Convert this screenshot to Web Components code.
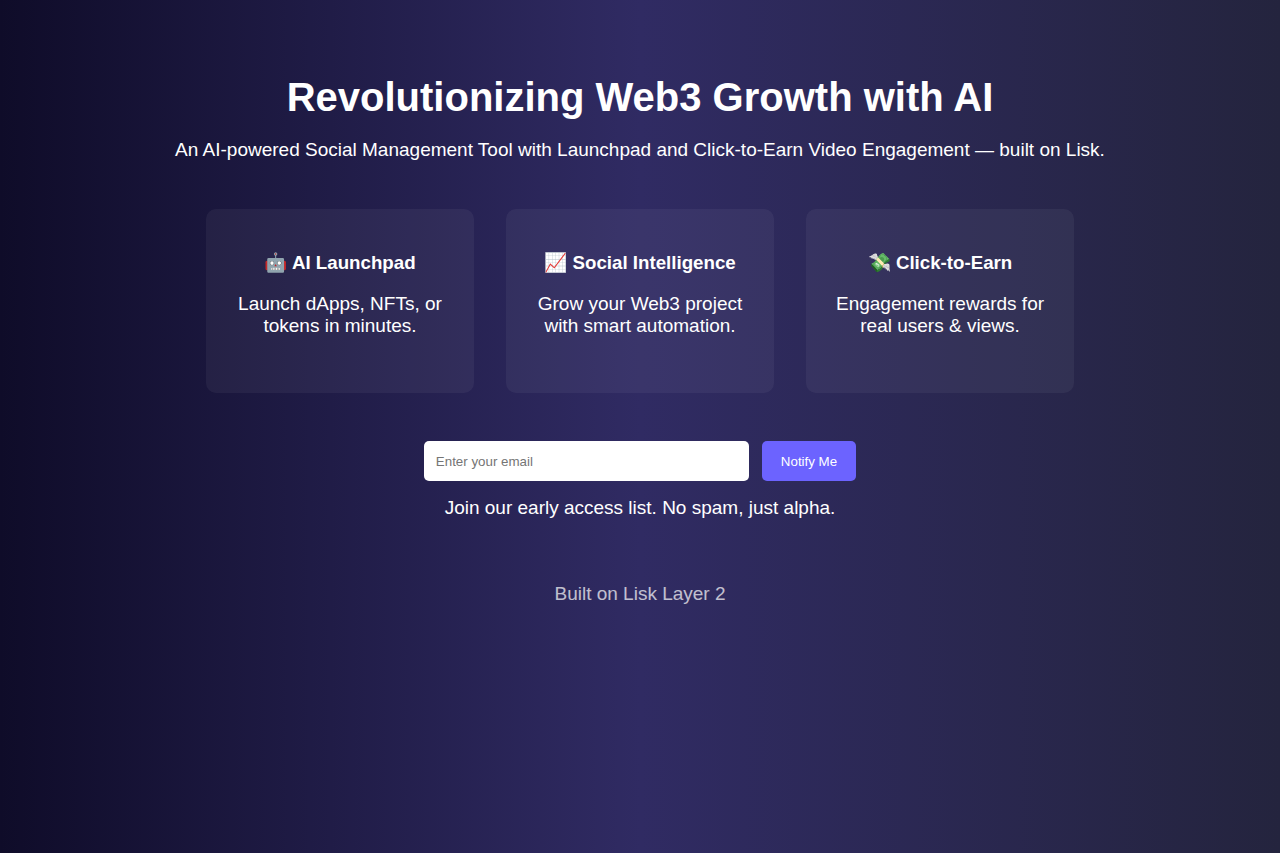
<!DOCTYPE html>
<html lang="en">
<head>
<meta charset="utf-8">
<meta name="viewport" content="width=device-width, initial-scale=1">
<title>Revolutionizing Web3 Growth with AI</title>
<style>
body {
  margin: 0;
  min-height: 100vh;
  background: linear-gradient(to right, #0f0c29, #302b63, #24243e);
  color: #fff;
  font-family: "Liberation Sans", Arial, sans-serif;
}
</style>
</head>
<body>
<landing-page>
  <page-hero slot="hero">
    <span slot="title">Revolutionizing Web3 Growth with AI</span>
    An AI-powered Social Management Tool with Launchpad and Click-to-Earn Video Engagement — built on Lisk.
  </page-hero>
  <feature-list>
    <feature-card><span slot="title">🤖 AI Launchpad</span>Launch dApps, NFTs, or tokens in minutes.</feature-card>
    <feature-card><span slot="title">📈 Social Intelligence</span>Grow your Web3 project with smart automation.</feature-card>
    <feature-card><span slot="title">💸 Click-to-Earn</span>Engagement rewards for real users &amp; views.</feature-card>
  </feature-list>
  <email-signup>Join our early access list. No spam, just alpha.</email-signup>
  <span slot="footer">Built on Lisk Layer 2</span>
</landing-page>
<script>
const define = (name, html) => customElements.define(name, class extends HTMLElement {
  constructor() {
    super();
    this.attachShadow({ mode: "open" }).innerHTML = html;
  }
});

define("landing-page", `
  <style>
    :host { display: block; padding: 71px 32px 32px; text-align: center; line-height: 22px; }
    main { display: flex; flex-direction: column; gap: 48px; }
    footer { margin-top: 64px; font-size: 19px; opacity: 0.7; }
  </style>
  <slot name="hero"></slot>
  <main><slot></slot></main>
  <footer><slot name="footer"></slot></footer>`);

define("page-hero", `
  <style>
    :host { display: block; margin-bottom: 48px; }
    h1 { margin: 0 0 16px; font-size: 40px; line-height: 52px; }
    p { margin: 0; font-size: 19px; }
  </style>
  <header><h1><slot name="title"></slot></h1><p><slot></slot></p></header>`);

define("feature-list", `
  <style>
    :host { display: flex; flex-wrap: wrap; justify-content: center; gap: 32px; }
  </style>
  <slot></slot>`);

define("feature-card", `
  <style>
    :host { display: block; box-sizing: border-box; width: 268px; min-height: 184px; padding: 43px 24px; border-radius: 10px; background: rgba(255, 255, 255, 0.05); }
    h3 { margin: 0 0 19px; }
    p { margin: 0; font-size: 19px; }
  </style>
  <h3><slot name="title"></slot></h3><p><slot></slot></p>`);

define("email-signup", `
  <style>
    :host { display: block; }
    form { display: flex; justify-content: center; gap: 13px; }
    input, button { box-sizing: border-box; height: 40px; border: 0; border-radius: 5px; font-family: inherit; }
    input { flex: 0 1 325px; min-width: 0; padding: 0 12px; color: #000; background: #fff; }
    button { padding: 0 19px; color: #fff; background: #6c63ff; cursor: pointer; }
    p { margin: 16px 0 0; font-size: 19px; }
  </style>
  <form onsubmit="return false">
    <input type="email" placeholder="Enter your email" aria-label="Email address">
    <button type="submit">Notify Me</button>
  </form>
  <p><slot></slot></p>`);
</script>
</body>
</html>
